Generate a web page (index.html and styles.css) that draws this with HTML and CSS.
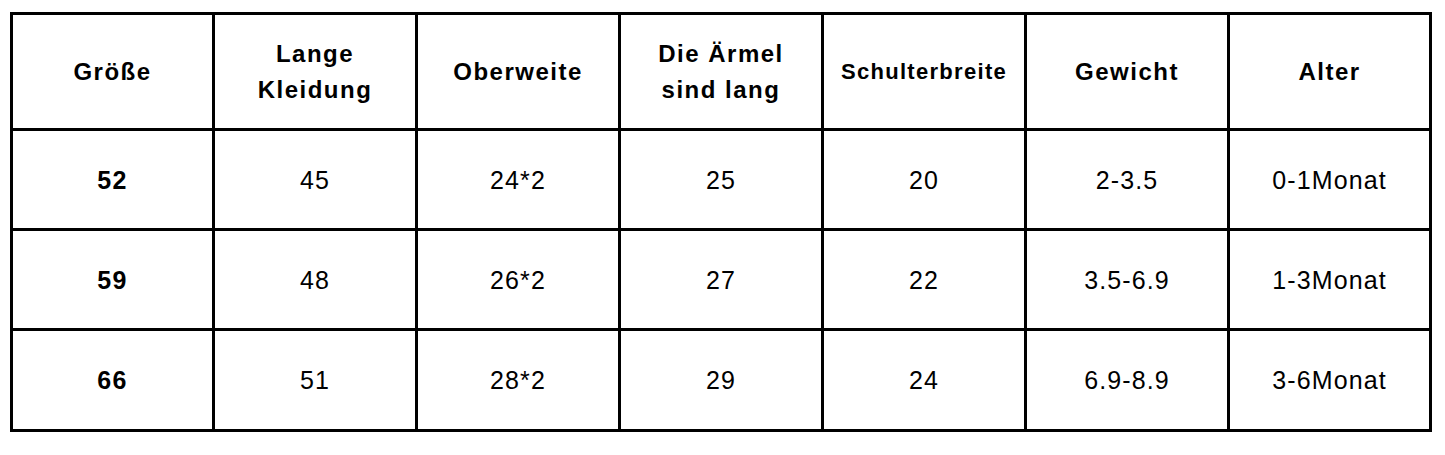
FILE: index.html
```html
<!DOCTYPE html>
<html lang="de">
<head>
<meta charset="utf-8">
<title>Größentabelle</title>
<link rel="stylesheet" href="styles.css">
</head>
<body>
<table class="size-table">
  <colgroup>
    <col class="c-edge"><col class="c-mid"><col class="c-mid"><col class="c-mid"><col class="c-mid"><col class="c-mid"><col class="c-edge">
  </colgroup>
  <thead>
    <tr class="head-row">
      <th>Größe</th>
      <th>Lange<br>Kleidung</th>
      <th>Oberweite</th>
      <th>Die Ärmel<br>sind lang</th>
      <th class="small">Schulterbreite</th>
      <th>Gewicht</th>
      <th>Alter</th>
    </tr>
  </thead>
  <tbody>
    <tr class="body-row">
      <td class="key">52</td><td>45</td><td>24*2</td><td>25</td><td>20</td><td>2-3.5</td><td>0-1Monat</td>
    </tr>
    <tr class="body-row">
      <td class="key">59</td><td>48</td><td>26*2</td><td>27</td><td>22</td><td>3.5-6.9</td><td>1-3Monat</td>
    </tr>
    <tr class="body-row last">
      <td class="key">66</td><td>51</td><td>28*2</td><td>29</td><td>24</td><td>6.9-8.9</td><td>3-6Monat</td>
    </tr>
  </tbody>
</table>
</body>
</html>
```

FILE: styles.css
```css
html, body {
  margin: 0;
  padding: 0;
  background: #ffffff;
}

body {
  padding: 12px 0 0 10px;
  font-family: "Liberation Sans", Arial, sans-serif;
  color: #000000;
}

.size-table {
  border-collapse: separate;
  border-spacing: 0;
  border-top: 3px solid #000;
  border-left: 3px solid #000;
  table-layout: fixed;
  width: 1422px;
}

.c-edge { width: 202px; }
.c-mid { width: 203px; }

.size-table th,
.size-table td {
  border-right: 3px solid #000;
  border-bottom: 3px solid #000;
  padding: 0;
  text-align: center;
  vertical-align: middle;
}

.head-row th {
  height: 113px;
  font-size: 24px;
  font-weight: 700;
  line-height: 36px;
  letter-spacing: 1.5px;
}

.head-row th.small {
  font-size: 22px;
  letter-spacing: 1.3px;
}

.body-row td {
  height: 97px;
  font-size: 25px;
  font-weight: 400;
  line-height: 30px;
  letter-spacing: 1.1px;
}

.body-row.last td {
  height: 98px;
}

.body-row td.key {
  font-weight: 700;
  letter-spacing: 1.3px;
}
```
